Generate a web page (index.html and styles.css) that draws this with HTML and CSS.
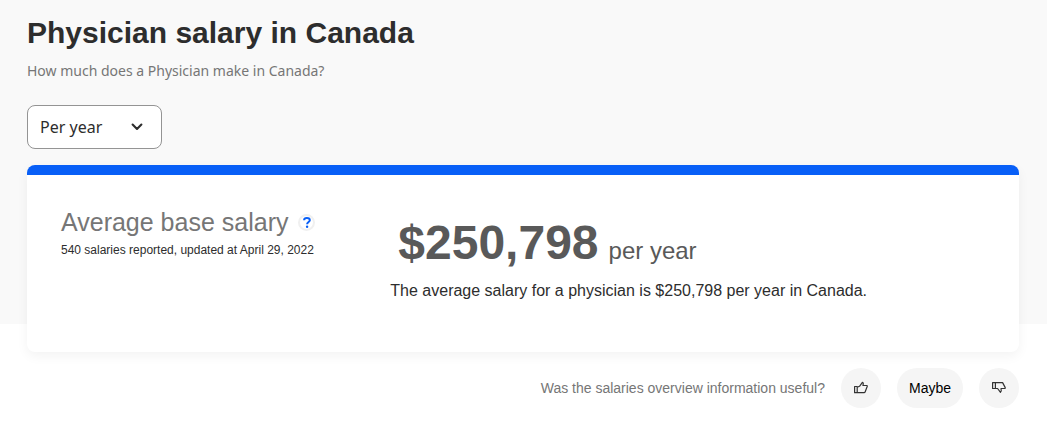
FILE: index.html
```html
<!DOCTYPE html>
<html lang="en">
<head>
    <meta charset="UTF-8">
    <meta name="viewport" content="width=device-width, initial-scale=1.0">
    <title>Physician salary in Canada</title>
    <link rel="stylesheet" href="styles.css">
</head>
<body>
    <!-- Page header -->
    <header class="hero">
        <h1>Physician salary in Canada</h1>
        <p class="subtitle">How much does a Physician make in Canada?</p>
        <div class="period">
            <select class="period-select" aria-label="Salary period">
                <option>Per hour</option>
                <option>Per day</option>
                <option>Per week</option>
                <option>Per month</option>
                <option selected>Per year</option>
            </select>
            <svg class="period-arrow" width="12" height="8" viewBox="0 0 12 8" aria-hidden="true">
                <path d="M1.6 1.6 6 6l4.4-4.4" fill="none" stroke="#2d2d2d" stroke-width="2.1" stroke-linecap="round" stroke-linejoin="round"/>
            </svg>
        </div>
    </header>

    <main class="container">
        <!-- Salary card -->
        <section class="salary-card">
            <div class="overview">
                <div class="overview-title">
                    <h2>Average base salary</h2>
                    <button class="help-btn" type="button" aria-label="About average base salary">
                        <svg width="8" height="11" viewBox="0 0 8 11" aria-hidden="true">
                            <path d="M1.1 3.3C1.1 1.8 2.3 1 3.9 1s2.9.9 2.9 2.3C6.8 5 4.1 5.1 4.1 7.2" fill="none" stroke="#085ff7" stroke-width="2"/>
                            <circle cx="4.1" cy="9.7" r="1.2" fill="#085ff7"/>
                        </svg>
                    </button>
                </div>
                <p class="reported">540 salaries reported, updated at April 29, 2022</p>
            </div>
            <div class="salary">
                <p class="salary-value"><strong>$250,798</strong><span>per year</span></p>
                <p class="salary-text">The average salary for a physician is $250,798 per year in Canada.</p>
            </div>
        </section>

        <!-- Feedback -->
        <div class="feedback">
            <p>Was the salaries overview information useful?</p>
            <button class="feedback-btn" type="button" aria-label="Yes">
                <svg width="14" height="14" viewBox="0 0 14 14" fill="none" stroke="#333" stroke-width="1.2" stroke-linejoin="round" aria-hidden="true">
                    <path d="M.6 5.500h2.600v6.200H.6zM3.200 6.300 5.500 5.300l2.900-4c1 .3 1.100 1.300.5 3.200h3.800c.6 0 .7.5.5 1l-2 5.200c-.2.600-.6 1-1.200 1H3.200"/>
                </svg>
            </button>
            <button class="feedback-btn" type="button">Maybe</button>
            <button class="feedback-btn" type="button" aria-label="No">
                <svg width="14" height="14" viewBox="0 0 14 14" fill="none" stroke="#333" stroke-width="1.2" stroke-linejoin="round" aria-hidden="true">
                    <path d="M.6 1.600h2.800v5.900H.6zM3.400 1.600h7.200l2.500 4.800c.3.600.1 1.100-.5 1.100H9c.4 1.500.3 3.200-.5 3.800L5.600 7.500H3.400"/>
                </svg>
            </button>
        </div>
    </main>
</body>
</html>
```
FILE: styles.css
```css
:root {
    --blue: #085ff7;
    --bg-light: #f9f9f9;
    --text-dark: #2d2d2d;
    --text-grey: #767676;
    --heading-grey: #595959;
}

* {
    margin: 0;
    padding: 0;
    box-sizing: border-box;
}

body {
    background: #fff;
    color: var(--text-dark);
    font-family: "Liberation Sans", Arial, sans-serif;
}

/* Header */
.hero {
    background: var(--bg-light);
    padding: 13px 28px 175px 27px;
}

h1 {
    font-size: 30px;
    line-height: 40px;
}

.subtitle {
    margin-top: 7px;
    color: var(--text-grey);
    font-family: "Noto Sans", sans-serif;
    font-size: 14px;
    line-height: 21px;
}

.period {
    position: relative;
    width: 135px;
    margin-top: 24px;
}

.period-select {
    display: block;
    width: 100%;
    height: 44px;
    padding: 0 36px 0 12px;
    appearance: none;
    background: #fff;
    border: 1px solid #949494;
    border-radius: 8px;
    color: var(--text-dark);
    font-family: "Noto Sans", sans-serif;
    font-size: 16px;
}

.period-arrow {
    position: absolute;
    top: 18px;
    right: 19px;
    pointer-events: none;
}

/* Salary card */
.container {
    margin-top: -159px;
    padding: 0 28px 16px 27px;
}

.salary-card {
    display: grid;
    grid-template-columns: 1fr 2fr;
    gap: 32px;
    padding: 32px 34px 49px;
    background: #fff;
    border-top: 10px solid var(--blue);
    border-radius: 8px;
    box-shadow: 0 4px 12px rgba(0, 0, 0, 0.05);
}

.overview-title {
    display: flex;
    align-items: center;
    gap: 10px;
    white-space: nowrap;
}

h2 {
    color: var(--text-grey);
    font-size: 25px;
    font-weight: 400;
    line-height: 30px;
}

.help-btn {
    display: flex;
    align-items: center;
    justify-content: center;
    width: 17px;
    height: 17px;
    background: #fff;
    border: 2px solid #f0f0f0;
    border-radius: 50%;
    cursor: pointer;
}

.reported {
    margin-top: 4px;
    font-size: 12px;
    line-height: 18px;
    white-space: nowrap;
}

.salary-value {
    display: flex;
    align-items: baseline;
    gap: 10px;
    padding: 8px 8px 0;
    color: var(--heading-grey);
    font-size: 24px;
}

.salary-value strong {
    font-size: 48px;
    line-height: 56px;
}

.salary-text {
    margin-top: 8px;
    font-size: 16px;
    line-height: 24px;
}

/* Feedback */
.feedback {
    display: flex;
    align-items: center;
    justify-content: flex-end;
    gap: 16px;
    margin-top: 16px;
    color: var(--text-grey);
    font-size: 14px;
}

.feedback-btn {
    display: flex;
    align-items: center;
    justify-content: center;
    min-width: 40px;
    height: 40px;
    padding: 0 12px;
    background: #f5f5f5;
    border: none;
    border-radius: 20px;
    color: #000;
    font-family: inherit;
    font-size: 14px;
    cursor: pointer;
}
```
